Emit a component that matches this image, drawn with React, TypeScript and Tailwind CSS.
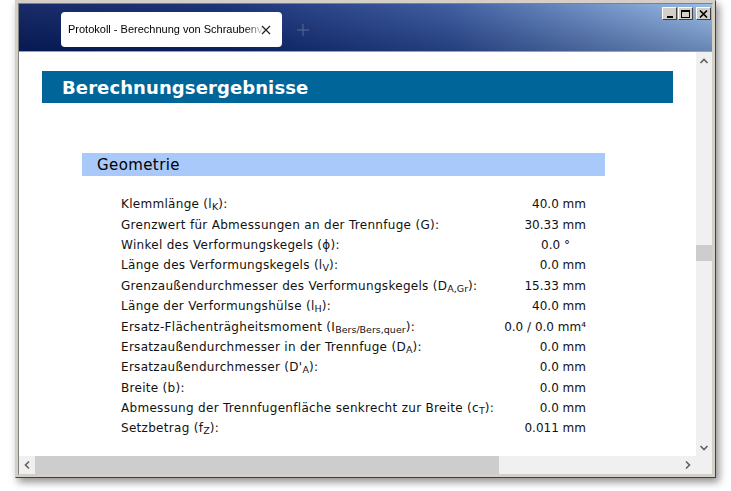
import React from "react";

function Sub({ children }: { children: React.ReactNode }) {
  return <span className="text-[9.5px] relative top-[2px] leading-none tracking-normal">{children}</span>;
}

const data: [React.ReactNode, React.ReactNode][] = [
  [<>Klemmlänge (l<Sub>K</Sub>):</>, "40.0 mm"],
  [<>Grenzwert für Abmessungen an der Trennfuge (G):</>, "30.33 mm"],
  [<>Winkel des Verformungskegels (ϕ):</>, <span className="pr-[16px]">0.0 °</span>],
  [<>Länge des Verformungskegels (l<Sub>V</Sub>):</>, "0.0 mm"],
  [<>Grenzaußendurchmesser des Verformungskegels (D<Sub>A,Gr</Sub>):</>, "15.33 mm"],
  [<>Länge der Verformungshülse (l<Sub>H</Sub>):</>, "40.0 mm"],
  [<>Ersatz-Flächenträgheitsmoment (I<Sub>Bers/Bers,quer</Sub>):</>, "0.0 / 0.0 mm⁴"],
  [<>Ersatzaußendurchmesser in der Trennfuge (D<Sub>A</Sub>):</>, "0.0 mm"],
  [<>Ersatzaußendurchmesser (D'<Sub>A</Sub>):</>, "0.0 mm"],
  [<>Breite (b):</>, "0.0 mm"],
  [<>Abmessung der Trennfugenfläche senkrecht zur Breite (c<Sub>T</Sub>):</>, "0.0 mm"],
  [<>Setzbetrag (f<Sub>Z</Sub>):</>, "0.011 mm"],
];

function WinBtn({ children }: { children: React.ReactNode }) {
  return (
    <div className="w-[15px] h-[13px] bg-[#d4d0c8] border-t border-l border-t-white border-l-white border-r border-b border-r-[#404040] border-b-[#404040] flex items-center justify-center">
      {children}
    </div>
  );
}

export default function App() {
  return (
    <div className="w-[731px] h-[491px] bg-white relative overflow-hidden" style={{ fontFamily: "'DejaVu Sans', Verdana, sans-serif" }}>
      <div className="ml-[15px] w-[701px] h-[478px] border border-t-[#d4d0c8] border-l-[#d4d0c8] border-r-[#404040] border-b-[#404040] bg-[#d4d0c8] p-[2px] shadow-[3px_4px_8px_rgba(0,0,0,0.45)] flex flex-col">
        <div className="flex-1 flex flex-col border border-t-[#808080] border-l-[#808080] border-r-[#d4d0c8] border-b-[#d4d0c8] overflow-hidden">
          {/* title bar */}
          <div className="h-[48px] shrink-0 relative bg-[linear-gradient(180deg,rgba(255,255,255,0.06),rgba(0,10,50,0.28)),linear-gradient(80deg,#0a1f5e_0%,#0f2870_30%,#34549a_62%,#95b9e6_100%)] border-b border-[#a0a0a0]">
            <div className="absolute left-[42px] top-[8px] w-[221px] h-[35px] bg-white rounded-[4px] flex items-center pl-[7px]">
              <span
                className="text-[11px] text-black whitespace-nowrap overflow-hidden w-[197px]"
                style={{ fontFamily: "'Liberation Sans', Arial, sans-serif", WebkitMaskImage: "linear-gradient(90deg,#000 90%,transparent 100%)", maskImage: "linear-gradient(90deg,#000 90%,transparent 100%)" }}
              >
                Protokoll - Berechnung von Schraubenverbindungen
              </span>
              <svg width="10" height="10" viewBox="0 0 10 10" className="ml-[-4px]">
                <path d="M1 1L9 9M9 1L1 9" stroke="#222" strokeWidth="1.2" />
              </svg>
            </div>
            <svg width="12" height="12" viewBox="0 0 12 12" className="absolute left-[278px] top-[20px]">
              <path d="M6 0V12M0 6H12" stroke="#5a6a8e" strokeWidth="1" />
            </svg>
            <div className="absolute right-[1px] top-[3px] flex gap-[1px]">
              <WinBtn>
                <div className="w-[6px] h-[2px] bg-black mt-[6px]" />
              </WinBtn>
              <WinBtn>
                <div className="w-[9px] h-[8px] border border-black border-t-2" />
              </WinBtn>
              <div className="ml-[2px]">
                <WinBtn>
                  <svg width="9" height="8" viewBox="0 0 9 8">
                    <path d="M1 0.5L8 7.5M8 0.5L1 7.5" stroke="#000" strokeWidth="1.6" />
                  </svg>
                </WinBtn>
              </div>
            </div>
          </div>
          {/* content + vertical scrollbar */}
          <div className="flex-1 flex min-h-0">
            <div className="flex-1 bg-white overflow-hidden">
              <div className="w-[720px]">
                <div className="mt-[19px] ml-[23px] w-[631px] h-[32px] bg-[#006699] flex items-center pl-[20px]">
                  <span className="text-white font-bold text-[18px] tracking-[0.1px]">Berechnungsergebnisse</span>
                </div>
                <div className="mt-[50px] ml-[63px] w-[523px] h-[23px] bg-[#a8c9f9] flex items-center pl-[15px] pt-[2px]">
                  <span className="text-black text-[15px] tracking-[0.4px]">Geometrie</span>
                </div>
                <div className="mt-[18px] ml-[102px] w-[465px] flex flex-col text-[12px] text-[#111]">
                  {data.map(([l, v], i) => (
                    <div key={i} className="h-[20.4px] flex items-center justify-between whitespace-nowrap">
                      <span className="tracking-[0.3px]">{l}</span>
                      <span>{v}</span>
                    </div>
                  ))}
                </div>
              </div>
            </div>
            <div className="w-[16px] bg-[#f0f0f0] flex flex-col items-center">
              <svg width="10" height="8" viewBox="0 0 10 8" className="mt-[5px]">
                <path d="M1.5 6L5 2.5L8.5 6" stroke="#606060" strokeWidth="1.6" fill="none" />
              </svg>
              <div className="mt-[180px] w-[16px] h-[16px] bg-[#cdcdcd]" />
              <div className="flex-1" />
              <svg width="10" height="8" viewBox="0 0 10 8" className="mb-[4px]">
                <path d="M1.5 2L5 5.5L8.5 2" stroke="#606060" strokeWidth="1.6" fill="none" />
              </svg>
            </div>
          </div>
          {/* horizontal scrollbar */}
          <div className="h-[18px] shrink-0 bg-[#f0f0f0] flex items-center">
            <div className="w-[16px] flex justify-center">
              <svg width="8" height="10" viewBox="0 0 8 10">
                <path d="M6 1.5L2.5 5L6 8.5" stroke="#606060" strokeWidth="1.6" fill="none" />
              </svg>
            </div>
            <div className="w-[464px] h-[18px] bg-[#cdcdcd]" />
            <div className="flex-1" />
            <div className="w-[16px] flex justify-center mr-[16px]">
              <svg width="8" height="10" viewBox="0 0 8 10">
                <path d="M2 1.5L5.5 5L2 8.5" stroke="#606060" strokeWidth="1.6" fill="none" />
              </svg>
            </div>
          </div>
        </div>
      </div>
    </div>
  );
}
